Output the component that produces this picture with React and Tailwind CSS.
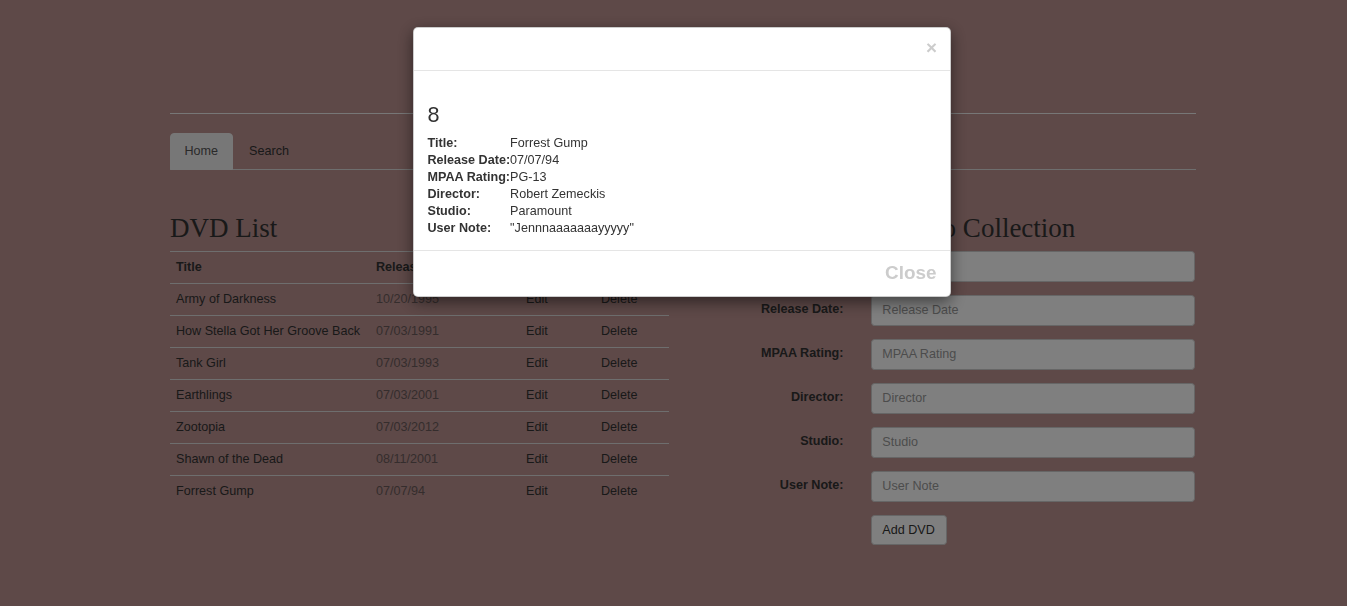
const dvds = [
  { title: "Army of Darkness", date: "10/20/1995" },
  { title: "How Stella Got Her Groove Back", date: "07/03/1991" },
  { title: "Tank Girl", date: "07/03/1993" },
  { title: "Earthlings", date: "07/03/2001" },
  { title: "Zootopia", date: "07/03/2012" },
  { title: "Shawn of the Dead", date: "08/11/2001" },
  { title: "Forrest Gump", date: "07/07/94" },
];

const fields = ["Title", "Release Date", "MPAA Rating", "Director", "Studio", "User Note"];

const details = [
  ["Title:", "Forrest Gump"],
  ["Release Date:", "07/07/94"],
  ["MPAA Rating:", "PG-13"],
  ["Director:", "Robert Zemeckis"],
  ["Studio:", "Paramount"],
  ["User Note:", '"Jennnaaaaaaayyyyy"'],
];

function DvdTable() {
  return (
    <table className="w-full border-collapse">
      <thead>
        <tr className="border-t border-[#ddd]">
          <th className="w-[200px] px-[6px] py-[6.5px] text-left font-bold">Title</th>
          <th className="w-[150px] px-[6px] py-[6.5px] text-left font-bold">Release Date</th>
          <th className="w-[75px] px-[6px] py-[6.5px]"></th>
          <th className="px-[6px] py-[6.5px]"></th>
        </tr>
      </thead>
      <tbody>
        {dvds.map((d) => (
          <tr key={d.title} className="border-t border-[#ddd]">
            <td className="px-[6px] py-[6.5px]">{d.title}</td>
            <td className="px-[6px] py-[6.5px] text-[#6a5a5a]">{d.date}</td>
            <td className="px-[6px] py-[6.5px]">Edit</td>
            <td className="px-[6px] py-[6.5px]">Delete</td>
          </tr>
        ))}
      </tbody>
    </table>
  );
}

function AddForm() {
  return (
    <div>
      {fields.map((f) => (
        <div key={f} className="flex mb-[13px]">
          <label className="w-[147.5px] text-right font-bold pt-[5px] text-[#333]">{f}:</label>
          <input
            placeholder={f}
            className="ml-[27px] w-[324px] h-[31px] border border-[#ccc] rounded-[3.6px] bg-white px-[10.8px] text-[12.6px] placeholder:text-[#999] outline-none"
          />
        </div>
      ))}
      <button className="ml-[174.5px] h-[30px] px-[10.8px] border border-[#ccc] rounded-[3.6px] bg-white text-[#333]">
        Add DVD
      </button>
    </div>
  );
}

function Modal() {
  return (
    <>
      <div className="fixed inset-0 bg-black/50" />
      <div className="fixed top-[27px] left-[413px] w-[538px] bg-white rounded-[5px] border border-black/20 shadow-[0_5px_15px_rgba(0,0,0,0.5)]">
        <div className="h-[43px] border-b border-[#e5e5e5] flex justify-end items-center pr-[13px]">
          <span className="text-[18.9px] font-bold leading-none text-[#ccc] -mt-[2px] [text-shadow:0_1px_0_#fff]">×</span>
        </div>
        <div className="px-[13.5px] pt-[14px] pb-[13px]">
          <h3 className="mt-[18px] mb-[8px] text-[21.6px] leading-[1.1] text-[#333]">8</h3>
          <div className="grid grid-cols-[auto_1fr] leading-[17px] text-[#333]">
            {details.map(([k, v]) => (
              <div key={k} className="contents">
                <span className="font-bold">{k}</span>
                <span>{v}</span>
              </div>
            ))}
          </div>
        </div>
        <div className="h-[46px] border-t border-[#e5e5e5] flex justify-end items-center pr-[13.5px]">
          <span className="text-[18.9px] font-bold text-[#ccc] [text-shadow:0_1px_0_#fff]">Close</span>
        </div>
      </div>
    </>
  );
}

export default function App() {
  return (
    <div className="min-h-screen bg-[#bc9290] font-['Liberation_Sans',Arial,sans-serif] text-[12.6px] leading-[18px] text-[#333]">
      <div className="ml-[170px] w-[1026px]">
        <div className="h-[113px]" />
        <div className="border-t border-[#eee]" />
        <ul className="mt-[19px] flex border-b border-[#ddd]">
          <li className="-mb-px">
            <a className="block px-[13.5px] pt-[8px] pb-[9px] border border-[#eee] rounded-t-[4px] bg-[#eee] text-[#555]">Home</a>
          </li>
          <li className="-mb-px ml-[2px]">
            <a className="block px-[13.5px] pt-[8px] pb-[9px] border border-transparent text-[#333]">Search</a>
          </li>
        </ul>
        <div className="mt-[23px] flex gap-[27px]">
          <div className="w-[499px]">
            <h2 className="mt-[21px] mb-[7px] font-['Liberation_Serif','Times_New_Roman',serif] text-[27px] leading-[1.1] text-[#333]">
              DVD List
            </h2>
            <DvdTable />
          </div>
          <div className="flex-1">
            <h2 className="mt-[21px] mb-[7px] text-center font-['Liberation_Serif','Times_New_Roman',serif] text-[27px] leading-[1.1] text-[#333]">
              Add DVD to Collection
            </h2>
            <AddForm />
          </div>
        </div>
      </div>
      <Modal />
    </div>
  );
}
